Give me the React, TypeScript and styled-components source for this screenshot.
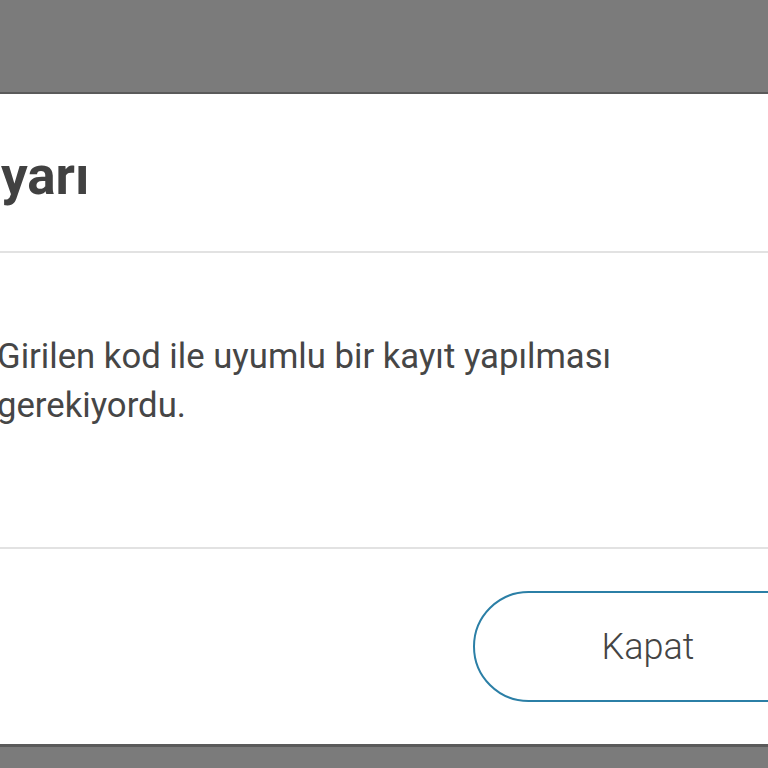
import React from "react";
import styled, { createGlobalStyle } from "styled-components";

const Global = createGlobalStyle`
  html, body { margin: 0; padding: 0; background: #7b7b7b; overflow: hidden; }
  body { font-family: Roboto, "Noto Sans", sans-serif; }
`;

const Page = styled.div`
  width: 768px;
  height: 768px;
  overflow: hidden;
  padding-top: 94px;
  box-sizing: border-box;
`;

const Modal = styled.div`
  margin-left: -60px;
  width: 940px;
  height: 650px;
  background: #ffffff;
  display: flex;
  flex-direction: column;
  box-shadow: 0 -2px 0 #5a5a5a, 0 3px 0 #5a5a5a;
`;

const Header = styled.div`
  height: 159px;
  box-sizing: border-box;
  border-bottom: 2px solid #e2e2e2;
  padding: 8px 0 0 26px;
  display: flex;
  align-items: center;
`;

const Title = styled.h1`
  margin: 0;
  font-family: Roboto, sans-serif;
  font-weight: 700;
  font-size: 53px;
  line-height: 1;
  color: #414141;
`;

const Body = styled.div`
  height: 296px;
  box-sizing: border-box;
  border-bottom: 2px solid #e2e2e2;
  padding: 79px 0 0 57px;
`;

const Message = styled.p`
  margin: 0;
  width: 640px;
  font-family: Roboto, sans-serif;
  font-weight: 400;
  font-size: 34.7px;
  line-height: 49px;
  color: #464646;
`;

const Footer = styled.div`
  flex: 1;
  display: flex;
  align-items: center;
  justify-content: flex-end;
  padding-right: 57px;
`;

const CloseButton = styled.button`
  width: 350px;
  height: 111px;
  border: 2px solid #2b7fa6;
  border-radius: 56px;
  background: #ffffff;
  font-family: Roboto, sans-serif;
  font-weight: 300;
  font-size: 36px;
  color: #444444;
  cursor: pointer;
`;

export default function App() {
  return (
    <>
      <Global />
      <Page>
        <Modal>
          <Header>
            <Title>Uyarı</Title>
          </Header>
          <Body>
            <Message>Girilen kod ile uyumlu bir kayıt yapılması gerekiyordu.</Message>
          </Body>
          <Footer>
            <CloseButton>Kapat</CloseButton>
          </Footer>
        </Modal>
      </Page>
    </>
  );
}
